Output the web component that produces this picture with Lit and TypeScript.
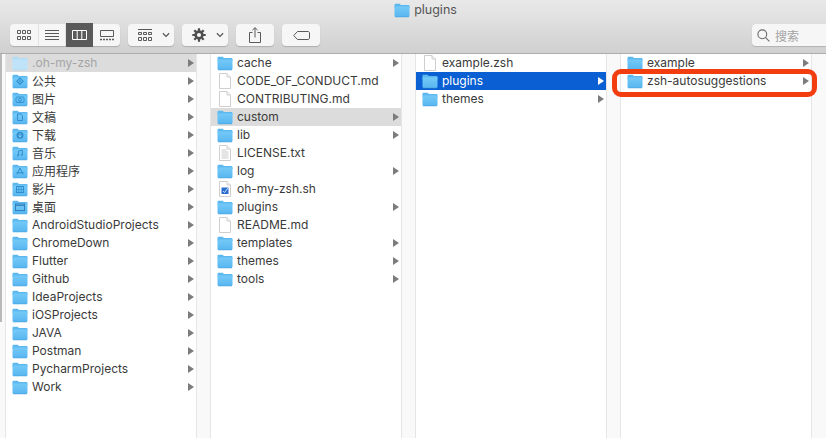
import { LitElement, html, svg, css } from "lit";
import { customElement } from "lit/decorators.js";

type Row = { name: string; kind?: string; arrow?: boolean; state?: string; faded?: boolean };

const folder = (name: string, kind = "folder", state = ""): Row => ({ name, kind, arrow: true, state });
const file = (name: string, kind = "file"): Row => ({ name, kind });

const COLUMNS: Row[][] = [
  [
    { name: ".oh-my-zsh", kind: "folder", arrow: true, state: "inactive", faded: true },
    folder("公共", "public"),
    folder("图片", "pictures"),
    folder("文稿", "documents"),
    folder("下载", "downloads"),
    folder("音乐", "music"),
    folder("应用程序", "apps"),
    folder("影片", "movies"),
    folder("桌面", "desktop"),
    folder("AndroidStudioProjects"),
    folder("ChromeDown"),
    folder("Flutter"),
    folder("Github"),
    folder("IdeaProjects"),
    folder("iOSProjects"),
    folder("JAVA"),
    folder("Postman"),
    folder("PycharmProjects"),
    folder("Work"),
  ],
  [
    folder("cache"),
    file("CODE_OF_CONDUCT.md"),
    file("CONTRIBUTING.md"),
    folder("custom", "folder", "inactive"),
    folder("lib"),
    file("LICENSE.txt", "text"),
    folder("log"),
    file("oh-my-zsh.sh", "script"),
    folder("plugins"),
    file("README.md"),
    folder("templates"),
    folder("themes"),
    folder("tools"),
  ],
  [file("example.zsh"), folder("plugins", "folder", "active"), folder("themes")],
  [folder("example"), folder("zsh-autosuggestions")],
];

// darker blue glyphs stamped on the special folders
const glyphs: Record<string, unknown> = {
  public: svg`<path d="M8 5.2 11 8.2 8 11.2 5 8.2Z" fill="none" stroke="#2f8fd0" stroke-width="1.2"/><circle cx="8" cy="8.2" r=".9" fill="#2f8fd0"/>`,
  pictures: svg`<rect x="4" y="6" width="8" height="5.4" rx="1" fill="none" stroke="#2f8fd0"/><circle cx="8" cy="8.7" r="1.5" fill="none" stroke="#2f8fd0"/>`,
  documents: svg`<path d="M5.5 5h3.4L10.5 6.6V11.5h-5Z" fill="none" stroke="#2f8fd0"/>`,
  downloads: svg`<circle cx="8" cy="8.2" r="3.5" fill="#2f8fd0"/><path d="M8 6v4M6.4 8.5 8 10l1.6-1.5" fill="none" stroke="#8fd3f8" stroke-width=".9"/>`,
  music: svg`<path d="M6.6 10.4V6l3.8-.8v4.4" fill="none" stroke="#2f8fd0"/><circle cx="5.9" cy="10.5" r=".9" fill="#2f8fd0"/><circle cx="9.7" cy="9.8" r=".9" fill="#2f8fd0"/>`,
  apps: svg`<path d="M8 5 5 11.4M8 5l3 6.4M4.4 9.8h7.2" fill="none" stroke="#2f8fd0"/>`,
  movies: svg`<rect x="4.5" y="5.5" width="7" height="6" fill="none" stroke="#2f8fd0"/><path d="M4.5 8.5h7M6.8 5.5v6M9.2 5.5v6" stroke="#2f8fd0" stroke-width=".7"/>`,
  desktop: svg`<rect x="3.5" y="5" width="9" height="6.6" fill="none" stroke="#2f7fb8"/><path d="M3.5 6.4h9" stroke="#2f7fb8"/>`,
};

function folderIcon(kind: string, faded?: boolean) {
  const body = faded ? "#bfe3f8" : "url(#fold)";
  const tab = faded ? "#b0dcf6" : "#5db8f0";
  return html`<svg class="icon" viewBox="0 0 16 16" width="16" height="16">
    <defs>
      <linearGradient id="fold" x1="0" y1="0" x2="0" y2="1">
        <stop offset="0" stop-color="#74c9f7"></stop>
        <stop offset="1" stop-color="#58b6f0"></stop>
      </linearGradient>
    </defs>
    <path d="M.5 3c0-.8.4-1.2 1.2-1.2h3.6c.7 0 1 .7 1.6 1.3h7.4c.7 0 1.2.5 1.2 1.2V6H.5Z" fill=${tab}></path>
    <path d="M.5 4.6h15v9.2c0 .7-.4 1.1-1.1 1.1H1.6c-.7 0-1.1-.4-1.1-1.1Z" fill=${body}></path>
    <path d="M1 14.9h14" stroke=${faded ? "#a8d8f4" : "#3f9fdc"} stroke-width=".6"></path>
    ${glyphs[kind] ?? ""}
  </svg>`;
}

function fileIcon(kind: string) {
  return html`<svg class="icon" viewBox="0 0 16 16" width="16" height="16">
    <path d="M2.5.5h7.5l3.5 3.5v11.5h-11Z" fill="#fff" stroke="#cfcfcf"></path>
    <path d="M10 .5V4h3.5" fill="#f2f2f2" stroke="#cfcfcf"></path>
    ${kind === "text"
      ? svg`<path d="M4.5 5h5M4.5 7h7M4.5 9h7M4.5 11h7M4.5 13h7" stroke="#bdbdbd" stroke-width=".8"/>`
      : ""}
    ${kind === "script"
      ? svg`<rect x="4.5" y="6.5" width="7" height="6.5" fill="#2a6fd0"/><path d="M6 10l1.5 1.5L11 7" fill="none" stroke="#dbe9fb" stroke-width=".9"/>`
      : ""}
  </svg>`;
}

@customElement("app-root")
export class AppRoot extends LitElement {
  static styles = css`
    :host {
      display: block;
      position: relative;
      width: 826px;
      height: 438px;
      overflow: hidden;
      background: #fff;
      font-family: "Inter", "Noto Sans CJK SC", sans-serif;
      font-size: 12px;
      color: #3a3a3a;
    }

    .header {
      height: 53px;
      box-sizing: content-box;
      border-bottom: 1px solid #adadad;
      background: linear-gradient(#e9e9e9, #d0d0d0);
      display: flex;
      flex-direction: column;
    }

    .title {
      height: 23px;
      display: flex;
      align-items: center;
      justify-content: center;
      gap: 4px;
      font-size: 12.5px;
      color: #555;
      padding-left: 25px;
      padding-bottom: 4px;
      box-sizing: border-box;
    }

    .toolbar {
      display: flex;
      align-items: flex-start;
      padding: 1px 0 0 10px;
      gap: 8px;
    }

    .btn,
    .segmented {
      height: 22px;
      background: #f6f6f6;
      border-radius: 4px;
      box-shadow: 0 1px 1px rgba(0, 0, 0, 0.18);
      display: flex;
      align-items: center;
      justify-content: center;
      color: #5a5a5a;
    }

    .segmented {
      width: 110px;
    }

    .seg {
      width: 27px;
      height: 22px;
      display: flex;
      align-items: center;
      justify-content: center;
      border-right: 1px solid #e2e2e2;
      box-sizing: border-box;
    }

    .seg:first-child {
      width: 29px;
    }

    .seg:last-child {
      border-right: none;
    }

    .seg.on {
      height: 24px;
      background: #5a5a5a;
      color: #fff;
      border-right: none;
    }

    .view,
    .gear {
      width: 46px;
      gap: 10px;
      padding-left: 6px;
      box-sizing: border-box;
    }

    .share,
    .tag {
      width: 38px;
    }

    .search {
      margin-left: auto;
      width: 74px;
      height: 22px;
      background: #f6f6f6;
      border-radius: 4px 0 0 4px;
      box-shadow: 0 1px 1px rgba(0, 0, 0, 0.15);
      display: flex;
      align-items: center;
      gap: 5px;
      padding-left: 5px;
      box-sizing: border-box;
      color: #a4a4a4;
      font-size: 12px;
    }

    .browser {
      height: 384px;
      display: flex;
    }

    .gutter {
      flex: none;
      width: 14px;
      box-sizing: border-box;
      background: #f9f9f9;
      border-right: 1px solid #e6e6e6;
    }

    .gutter.first {
      width: 6px;
    }

    .gutter.last {
      flex: 1;
      border-right: none;
    }

    .thumb {
      width: 2px;
      height: 268px;
      background: #b9b9b9;
    }

    .column {
      width: 190px;
      flex: none;
      background: #fff;
      border-right: 1px solid #e6e6e6;
      box-sizing: content-box;
    }

    .row {
      height: 18px;
      display: flex;
      align-items: center;
      padding: 0 2px 0 6px;
      gap: 4px;
      white-space: nowrap;
    }

    .row.inactive {
      background: #dcdcdc;
    }

    .row.active {
      background: #0a5fd3;
      color: #fff;
    }

    .row.faded .name {
      color: #a5a5a5;
    }

    .icon {
      flex: none;
    }

    .name {
      flex: 1;
      min-width: 0;
      padding-bottom: 2px;
    }

    .arrow {
      flex: none;
      width: 0;
      height: 0;
      border-left: 6px solid #7c7c7c;
      border-top: 4px solid transparent;
      border-bottom: 4px solid transparent;
    }

    .row.active .arrow {
      border-left-color: #fff;
    }

    .callout {
      position: absolute;
      left: 612px;
      top: 69px;
      width: 205px;
      height: 28px;
      box-sizing: border-box;
      border: 5px solid #f23d0f;
      border-radius: 9px;
      pointer-events: none;
    }
  `;

  renderRow(row: Row) {
    const isFile = row.kind === "file" || row.kind === "text" || row.kind === "script";
    return html`<div class="row ${row.state ?? ""} ${row.faded ? "faded" : ""}">
      ${isFile ? fileIcon(row.kind!) : folderIcon(row.kind ?? "folder", row.faded)}
      <span class="name">${row.name}</span>
      ${row.arrow ? html`<span class="arrow"></span>` : ""}
    </div>`;
  }

  renderToolbar() {
    const chevron = html`<svg width="8" height="6" viewBox="0 0 9 6"><path d="M1 1l3.5 3.5L8 1" fill="none" stroke="#555" stroke-width="1.3"></path></svg>`;
    const iconGrid = html`<svg width="14" height="10" viewBox="0 0 14 10" fill="none" stroke="currentColor">
      <path d="M.5.5h3v3h-3zM5.5.5h3v3h-3zM10.5.5h3v3h-3zM.5 6.5h3v3h-3zM5.5 6.5h3v3h-3zM10.5 6.5h3v3h-3z"></path>
    </svg>`;
    return html`<div class="toolbar">
      <div class="segmented">
        <div class="seg">${iconGrid}</div>
        <div class="seg">
          <svg width="14" height="10" viewBox="0 0 14 10" stroke="currentColor"><path d="M0 .5h14M0 3.5h14M0 6.5h14M0 9.5h14"></path></svg>
        </div>
        <div class="seg on">
          <svg width="15" height="10" viewBox="0 0 15 10" fill="none" stroke="currentColor"><path d="M.5.5h14v9H.5zM5.2.5v9M9.8.5v9"></path></svg>
        </div>
        <div class="seg">
          <svg width="14" height="11" viewBox="0 0 14 11" fill="none" stroke="currentColor"><path d="M.5.5h13v6H.5z"></path><path d="M0 9.5h2M3 9.5h2M6 9.5h2M9 9.5h2M12 9.5h2" stroke-width="1.5"></path></svg>
        </div>
      </div>
      <div class="btn view">
        <svg width="14" height="12" viewBox="0 0 14 12" fill="none" stroke="currentColor"><path d="M0 .5h14M.5 3.5h3v2h-3zM5.5 3.5h3v2h-3zM10.5 3.5h3v2h-3zM.5 8.5h3v3h-3zM5.5 8.5h3v3h-3zM10.5 8.5h3v3h-3z"></path></svg>
        ${chevron}
      </div>
      <div class="btn gear">
        <svg width="14" height="14" viewBox="0 0 14 14">
          <circle cx="7" cy="7" r="3.4" fill="none" stroke="#4e4e4e" stroke-width="2.6"></circle>
          <path d="M7 .3v13.4M.3 7h13.4M2.3 2.3l9.4 9.4M11.7 2.3l-9.4 9.4" stroke="#4e4e4e" stroke-width="2.2" stroke-dasharray="2.6 8.2"></path>
        </svg>
        ${chevron}
      </div>
      <div class="btn share">
        <svg width="12" height="16" viewBox="0 0 12 16" fill="none" stroke="currentColor">
          <path d="M3.5 5.5h-3v10h11v-10h-3M6 10.5V.8M3.4 3.2 6 .7l2.6 2.5"></path>
        </svg>
      </div>
      <div class="btn tag">
        <svg width="17" height="9" viewBox="0 0 17 9" fill="none" stroke="currentColor">
          <path d="M4.5.5H15c.8 0 1.5.6 1.5 1.5v5c0 .9-.7 1.5-1.5 1.5H4.5L.7 4.5Z"></path>
        </svg>
      </div>
      <div class="search">
        <svg width="13" height="13" viewBox="0 0 13 13" fill="none" stroke="#6a6a6a" stroke-width="1.1">
          <circle cx="5.3" cy="5.3" r="4.4"></circle>
          <path d="M8.6 8.6 12.4 12.4"></path>
        </svg>
        <span>搜索</span>
      </div>
    </div>`;
  }

  render() {
    return html`
      <div class="header">
        <div class="title">${folderIcon("folder")}<span>plugins</span></div>
        ${this.renderToolbar()}
      </div>
      <div class="browser">
        <div class="gutter first"><div class="thumb"></div></div>
        ${COLUMNS.map(
          (col, i) => html`
            ${i > 0 ? html`<div class="gutter"></div>` : ""}
            <div class="column">${col.map((row) => this.renderRow(row))}</div>
          `
        )}
        <div class="gutter last"></div>
      </div>
      <div class="callout"></div>
    `;
  }
}
